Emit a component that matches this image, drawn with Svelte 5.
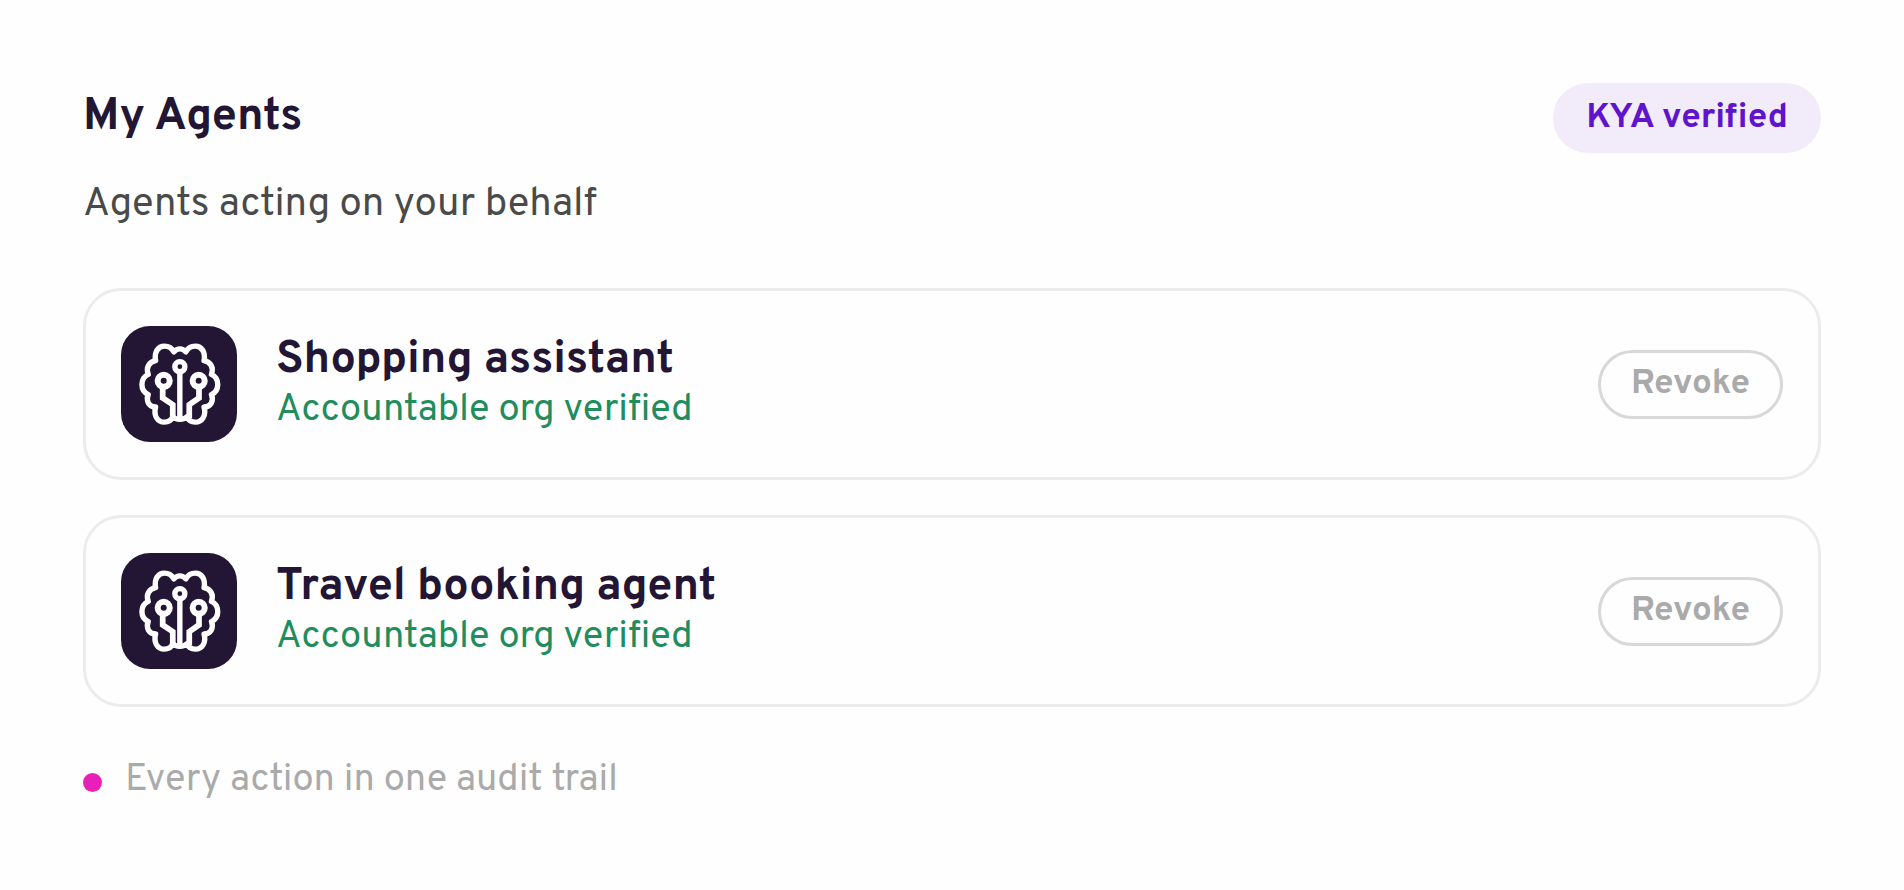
<script>
	const agents = [
		{ name: 'Shopping assistant', status: 'Accountable org verified' },
		{ name: 'Travel booking agent', status: 'Accountable org verified' }
	];
</script>

<main>
	<header>
		<div>
			<h1>My Agents</h1>
			<p class="subtitle">Agents acting on your behalf</p>
		</div>
		<span class="badge">KYA verified</span>
	</header>

	<ul>
		{#each agents as agent}
			<li>
				<svg class="icon" viewBox="0 0 345 345" aria-hidden="true">
					<rect width="345" height="345" rx="86" fill="#231534" />
					<g transform="translate(-35 -34)" fill="none" stroke="#fff" stroke-width="16" stroke-linejoin="round">
						<path d="M192 111C186 99 176 94 164 94C145 94 133 112 138 137C119 140 108 158 116 178C91 190 91 226 116 238C108 258 119 275 138 275C131 300 143 320 164 320C175 320 184 316 189 304C198 314 222 314 231 304C236 316 245 320 256 320C277 320 289 300 282 275C301 275 312 258 304 238C329 226 329 190 304 178C312 158 301 140 282 137C287 112 275 94 256 94C244 94 234 99 228 111C217 99 203 99 192 111Z" />
						<circle cx="210" cy="155" r="15" />
						<path d="M210 170V311" />
						<circle cx="162" cy="197" r="18" stroke-width="18" />
						<circle cx="266" cy="197" r="18" stroke-width="18" />
						<path d="M159 217V248L189 268V308M267 217V248L238 268V308" stroke-width="17" stroke-linejoin="miter" />
					</g>
				</svg>
				<div class="details">
					<h2>{agent.name}</h2>
					<p>{agent.status}</p>
				</div>
				<button type="button">Revoke</button>
			</li>
		{/each}
	</ul>

	<p class="audit"><span class="dot"></span>Every action in one audit trail</p>
</main>

<style>
	:global(body) {
		background: #fefefe;
	}

	main {
		padding: 83px;
		font-family: Overpass, Roboto, sans-serif;
		color: #231534;
	}

	h1, h2, p, ul {
		margin: 0;
		padding: 0;
	}

	header {
		display: flex;
		justify-content: space-between;
		align-items: flex-start;
	}

	h1, h2 {
		font-size: 45px;
		font-weight: 700;
	}

	h1 {
		line-height: 70px;
	}

	.subtitle {
		margin-top: 22px;
		font-size: 40px;
		line-height: 60px;
		color: #4a4a4a;
	}

	.badge {
		padding: 0 33px;
		border-radius: 35px;
		background: #f2ebfa;
		color: #5f14cc;
		font-size: 35px;
		font-weight: 700;
		line-height: 70px;
	}

	ul {
		display: flex;
		flex-direction: column;
		gap: 35px;
		margin-top: 53px;
		list-style: none;
	}

	li {
		display: flex;
		align-items: center;
		gap: 39px;
		padding: 35px;
		border: 3px solid #ececec;
		border-radius: 38px;
	}

	.icon {
		flex: none;
		width: 116px;
		height: 116px;
	}

	.details {
		flex: 1;
	}

	h2 {
		line-height: 54px;
	}

	.details p {
		font-size: 38px;
		line-height: 46px;
		color: #218c5c;
	}

	button {
		padding: 0 30px;
		border: 3px solid #d8d8d8;
		border-radius: 35px;
		background: none;
		color: #aaa;
		font-family: inherit;
		font-size: 35px;
		font-weight: 700;
		line-height: 63px;
		cursor: pointer;
	}

	.audit {
		display: flex;
		align-items: center;
		gap: 23px;
		margin-top: 46px;
		font-size: 38px;
		line-height: 56px;
		color: #aaa;
	}

	.dot {
		width: 19px;
		height: 19px;
		margin-top: 3px;
		border-radius: 50%;
		background: #e820b8;
	}
</style>
